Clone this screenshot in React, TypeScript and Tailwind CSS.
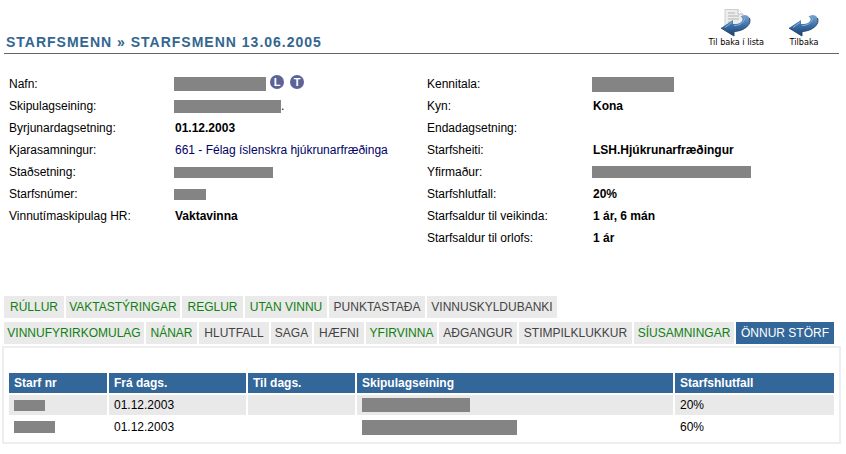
import type { ReactNode } from 'react'

interface Field {
    label: string
    value: ReactNode
}

interface Tab {
    label: string
    width: string
    tone?: 'green' | 'active'
}

// Solid block drawn in place of a personal value
function Redacted({ size }: { size: string }) {
    return <span aria-hidden="true" className={`-ml-px block shrink-0 bg-[#848484] ${size}`} />
}

function BadgeButton({ letter, title }: { letter: string; title: string }) {
    return (
        <button
            type="button"
            title={title}
            className="flex size-[14px] items-center justify-center rounded-full bg-[#5c6399] text-[11px] leading-none font-bold text-white"
        >
            {letter}
        </button>
    )
}

const LEFT_FIELDS: Field[] = [
    {
        label: 'Nafn:',
        value: (
            <span className="flex items-center">
                <Redacted size="h-[14px] w-[92px]" />
                <span className="ml-1 flex gap-[6px] pb-1">
                    <BadgeButton letter="L" title="Laun" />
                    <BadgeButton letter="T" title="Tími" />
                </span>
            </span>
        ),
    },
    {
        label: 'Skipulagseining:',
        value: (
            <span className="flex items-center font-normal">
                <Redacted size="h-[13px] w-[107px]" />.
            </span>
        ),
    },
    { label: 'Byrjunardagsetning:', value: '01.12.2003' },
    {
        label: 'Kjarasamningur:',
        value: (
            <a href="#kjarasamningur" className="font-normal text-[#000066]">
                661 - Félag íslenskra hjúkrunarfræðinga
            </a>
        ),
    },
    { label: 'Staðsetning:', value: <Redacted size="h-[11px] w-[99px]" /> },
    { label: 'Starfsnúmer:', value: <Redacted size="h-[11px] w-[32px]" /> },
    { label: 'Vinnutímaskipulag HR:', value: 'Vaktavinna' },
]

const RIGHT_FIELDS: Field[] = [
    { label: 'Kennitala:', value: <Redacted size="h-[15px] w-[82px]" /> },
    { label: 'Kyn:', value: 'Kona' },
    { label: 'Endadagsetning:', value: '' },
    { label: 'Starfsheiti:', value: 'LSH.Hjúkrunarfræðingur' },
    { label: 'Yfirmaður:', value: <Redacted size="h-[12px] w-[159px]" /> },
    { label: 'Starfshlutfall:', value: '20%' },
    { label: 'Starfsaldur til veikinda:', value: '1 ár, 6 mán' },
    { label: 'Starfsaldur til orlofs:', value: '1 ár' },
]

const TAB_ROWS: Tab[][] = [
    [
        { label: 'RÚLLUR', width: 'w-[60px]', tone: 'green' },
        { label: 'VAKTASTÝRINGAR', width: 'w-[114px]', tone: 'green' },
        { label: 'REGLUR', width: 'w-[61px]', tone: 'green' },
        { label: 'UTAN VINNU', width: 'w-[82px]', tone: 'green' },
        { label: 'PUNKTASTAÐA', width: 'w-[96px]' },
        { label: 'VINNUSKYLDUBANKI', width: 'w-[130px]' },
    ],
    [
        { label: 'VINNUFYRIRKOMULAG', width: 'w-[140px]', tone: 'green' },
        { label: 'NÁNAR', width: 'w-[51px]', tone: 'green' },
        { label: 'HLUTFALL', width: 'w-[70px]' },
        { label: 'SAGA', width: 'w-[41px]' },
        { label: 'HÆFNI', width: 'w-[50px]' },
        { label: 'YFIRVINNA', width: 'w-[71px]', tone: 'green' },
        { label: 'AÐGANGUR', width: 'w-[78px]' },
        { label: 'STIMPILKLUKKUR', width: 'w-[113px]' },
        { label: 'SÍUSAMNINGAR', width: 'w-[100px]', tone: 'green' },
        { label: 'ÖNNUR STÖRF', width: 'w-[98px]', tone: 'active' },
    ],
]

const JOBS = [
    { id: 1, number: 'h-[11px] w-[31px]', from: '01.12.2003', to: '', unit: 'h-[14px] w-[108px]', ratio: '20%' },
    { id: 2, number: 'h-[12px] w-[41px]', from: '01.12.2003', to: '', unit: 'h-[15px] w-[155px]', ratio: '60%' },
]

function tabTone(tone: Tab['tone']) {
    if (tone === 'active') return 'bg-[#336699] text-white'
    if (tone === 'green') return 'bg-[#eaeaea] text-[#108010]'
    return 'bg-[#eaeaea] text-[#444444]'
}

function BackArrow({ id }: { id: string }) {
    return (
        <>
            <defs>
                <linearGradient id={id} x1="0" y1="0" x2="0" y2="1">
                    <stop offset="0" stopColor="#7fa6cf" />
                    <stop offset="0.5" stopColor="#3b6fa8" />
                    <stop offset="1" stopColor="#1c3f70" />
                </linearGradient>
            </defs>
            <path d="M1 21 L13 13 L13 17 C18 17.5 22 15.5 22.5 13 C22.7 11.5 22 10.5 20.5 9.5 C24 7 28 7.5 29.5 11 C32 17 25 24 14 24.5 L14 29 Z" fill={`url(#${id})`} />
            <path d="M1 21 L14 29 L14 24.5 C25 24 32 17 29.5 11" fill="none" stroke="#24486f" strokeWidth="1" />
            <path d="M5 20.5 L12 15.5 M14 18.500 C20 18.500 24.5 15.5 24.5 11" fill="none" stroke="#86b1da" strokeWidth="1" />
        </>
    )
}

function BackToListIcon() {
    return (
        <svg viewBox="0 0 32 30" className="h-[30px] w-8" aria-hidden="true">
            <path d="M5 2.5 H18 L23 7 V20 H5 Z" fill="#ededed" stroke="#cfcfcf" />
            <path d="M18 2.5 V7 H23" fill="#ffffff" stroke="#bdbdbd" />
            <path d="M8 6 H15 M8 9 H19 M8 12 H19 M8 15 H13" stroke="#b4b4b4" />
            <BackArrow id="arrow-list" />
        </svg>
    )
}

function BackIcon() {
    return (
        <svg viewBox="0 0 32 30" className="h-[30px] w-8" aria-hidden="true">
            <BackArrow id="arrow-back" />
        </svg>
    )
}

function ToolButton({ icon, label }: { icon: ReactNode; label: string }) {
    return (
        <button type="button" className="flex flex-col items-center font-['DejaVu_Sans_Condensed','DejaVu_Sans',sans-serif] text-[9px] leading-[10px] whitespace-nowrap">
            {icon}
            {label}
        </button>
    )
}

function FieldList({ fields }: { fields: Field[] }) {
    return (
        <dl>
            {fields.map((field) => (
                <div key={field.label} className="flex h-[22px] items-center">
                    <dt className="w-[166px] shrink-0">{field.label}</dt>
                    <dd className="font-bold whitespace-nowrap">{field.value}</dd>
                </div>
            ))}
        </dl>
    )
}

export default function App() {
    return (
        <main className="bg-white pr-[5px] pb-3 pl-[2px] font-['Liberation_Sans',Arial,sans-serif] text-[12px] leading-4 text-black">
            <header className="mx-[2px] flex h-[54px] items-end justify-between border-b border-[#666666]">
                <h1 className="pb-[3px] pl-[2px] text-[14px] leading-4 font-bold tracking-[1px] text-[#336690]">STARFSMENN » STARFSMENN 13.06.2005</h1>
                <div className="flex gap-6 pr-[19px] pb-[6px]">
                    <ToolButton icon={<BackToListIcon />} label="Til baka í lista" />
                    <ToolButton icon={<BackIcon />} label="Tilbaka" />
                </div>
            </header>

            <section className="grid grid-cols-2 gap-x-1 pt-[19px] pl-[7px]">
                <FieldList fields={LEFT_FIELDS} />
                <FieldList fields={RIGHT_FIELDS} />
            </section>

            <nav className="mt-[47px] ml-[2px] flex flex-col gap-1">
                {TAB_ROWS.map((row, index) => (
                    <div key={index} className="flex gap-[2px]">
                        {row.map((tab) => (
                            <button key={tab.label} type="button" className={`h-[22px] shrink-0 text-center whitespace-nowrap ${tab.width} ${tabTone(tab.tone)}`}>
                                {tab.label}
                            </button>
                        ))}
                    </div>
                ))}
            </nav>

            <section className="mt-[2px] border-2 border-[#eeeeee] px-[3px] pt-[23px] pb-[3px]">
                <table className="w-full table-fixed border-separate border-spacing-[2px] text-left">
                    <thead>
                        <tr className="h-5 bg-[#336699] text-white">
                            <th className="w-[98px] px-[5px] py-0">Starf nr</th>
                            <th className="w-[137px] px-[5px] py-0">Frá dags.</th>
                            <th className="w-[107px] px-[5px] py-0">Til dags.</th>
                            <th className="px-[5px] py-0">Skipulagseining</th>
                            <th className="w-[159px] px-[5px] py-0">Starfshlutfall</th>
                        </tr>
                    </thead>
                    <tbody>
                        {JOBS.map((job) => (
                            <tr key={job.id} className="h-5 odd:bg-[#e9e9e9]">
                                <td className="px-[6px] py-0">
                                    <Redacted size={job.number} />
                                </td>
                                <td className="px-[5px] py-0">{job.from}</td>
                                <td className="px-[5px] py-0">{job.to}</td>
                                <td className="px-[6px] py-0">
                                    <Redacted size={job.unit} />
                                </td>
                                <td className="px-[5px] py-0">{job.ratio}</td>
                            </tr>
                        ))}
                    </tbody>
                </table>
            </section>
        </main>
    )
}
